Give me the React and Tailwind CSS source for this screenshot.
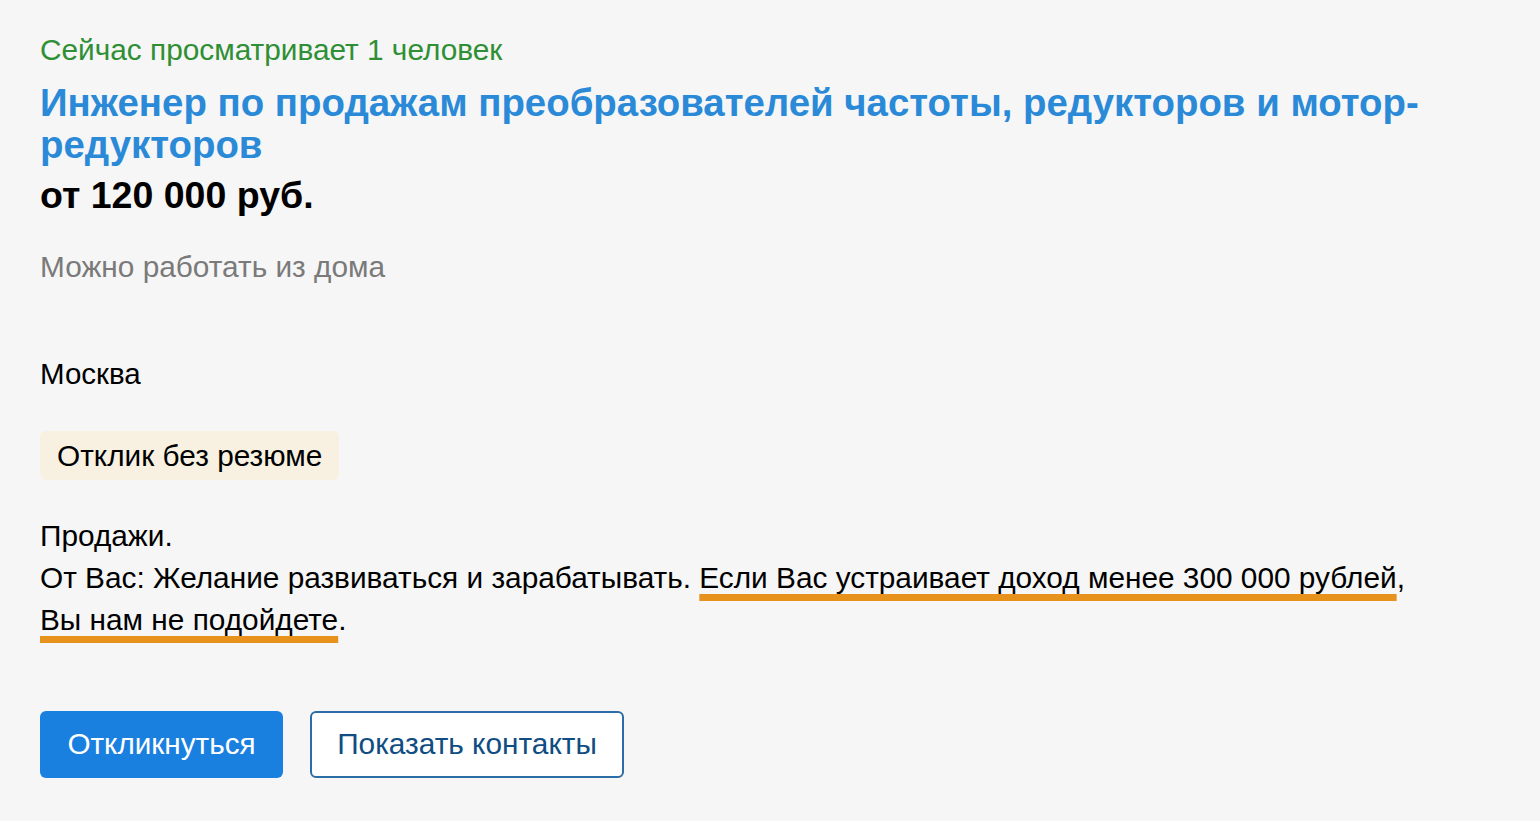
export default function App() {
  return (
    <div className="min-h-[821px] w-full bg-[#f6f6f6] px-[40px] pt-[34px] text-black" style={{ fontFamily: '"Liberation Sans", Arial, sans-serif' }}>
      <div className="text-[29.8px] leading-[32px] text-[#2f8f35]">Сейчас просматривает 1 человек</div>
      <h1 className="mt-[16px] max-w-[1420px] text-[38.4px] font-bold leading-[42px] text-[#2b8ad8]">
        Инженер по продажам преобразователей частоты, редукторов и мотор-редукторов
      </h1>
      <div className="mt-[7px] text-[37.5px] font-bold leading-[44px]">от 120 000 руб.</div>
      <div className="mt-[33px] text-[29.8px] leading-[34px] text-[#7a7a7a]">Можно работать из дома</div>
      <div className="mt-[73px] text-[29.5px] leading-[34px]">Москва</div>
      <div className="mt-[40px] flex">
        <span className="rounded-[6px] bg-[#f8f1e2] px-[17px] py-[6px] text-[29.8px] leading-[37px]">Отклик без резюме</span>
      </div>
      <div className="mt-[35px] text-[29.8px] leading-[42px]">
        <div>Продажи.</div>
        <div className="max-w-[1395px]">
          От Вас: Желание развиваться и зарабатывать.{" "}
          <span className="underline decoration-[#e8921e] decoration-[7px] underline-offset-[6px]">Если Вас устраивает доход менее 300 000 рублей</span>,{" "}
          <span className="underline decoration-[#e8921e] decoration-[7px] underline-offset-[6px]">Вы нам не подойдете</span>.
        </div>
      </div>
      <div className="mt-[70px] flex gap-[27px]">
        <button className="h-[67px] w-[243px] rounded-[6px] bg-[#1a80e0] text-[29.7px] text-white">Откликнуться</button>
        <button className="h-[67px] w-[314px] rounded-[6px] border-2 border-[#2d6da6] bg-white text-[29.8px] text-[#0f4d82]">Показать контакты</button>
      </div>
    </div>
  );
}
